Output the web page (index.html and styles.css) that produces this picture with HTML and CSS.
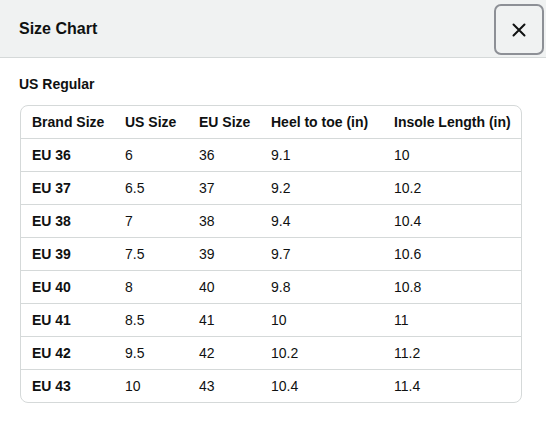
FILE: index.html
```html
<!DOCTYPE html>
<html lang="en">
<head>
    <meta charset="UTF-8">
    <meta name="viewport" content="width=device-width, initial-scale=1.0">
    <title>Size Chart</title>
    <link rel="stylesheet" href="styles.css">
</head>
<body>
    <div class="modal-header">
        <h2 class="modal-title">Size Chart</h2>
        <button class="close-button" aria-label="Close">
            <svg width="16" height="16" viewBox="0 0 16 16">
                <path d="M2.5 2.5 L13.5 13.5 M13.5 2.5 L2.5 13.5" stroke="#0f1111" stroke-width="2" stroke-linecap="round"/>
            </svg>
        </button>
    </div>
    <div class="modal-body">
        <h3 class="section-title">US Regular</h3>
        <div class="table-wrap">
            <table class="size-table">
                <thead>
                    <tr>
                        <th class="col-brand">Brand Size</th>
                        <th class="col-us">US Size</th>
                        <th class="col-eu">EU Size</th>
                        <th class="col-heel">Heel to toe (in)</th>
                        <th class="col-insole">Insole Length (in)</th>
                    </tr>
                </thead>
                <tbody>
                    <tr><th>EU 36</th><td>6</td><td>36</td><td>9.1</td><td>10</td></tr>
                    <tr><th>EU 37</th><td>6.5</td><td>37</td><td>9.2</td><td>10.2</td></tr>
                    <tr><th>EU 38</th><td>7</td><td>38</td><td>9.4</td><td>10.4</td></tr>
                    <tr><th>EU 39</th><td>7.5</td><td>39</td><td>9.7</td><td>10.6</td></tr>
                    <tr><th>EU 40</th><td>8</td><td>40</td><td>9.8</td><td>10.8</td></tr>
                    <tr><th>EU 41</th><td>8.5</td><td>41</td><td>10</td><td>11</td></tr>
                    <tr><th>EU 42</th><td>9.5</td><td>42</td><td>10.2</td><td>11.2</td></tr>
                    <tr><th>EU 43</th><td>10</td><td>43</td><td>10.4</td><td>11.4</td></tr>
                </tbody>
            </table>
        </div>
    </div>
</body>
</html>
```

FILE: styles.css
```css
body {
    font-family: "Liberation Sans", Arial, sans-serif;
    color: #0f1111;
    margin: 0;
    padding: 0;
    background-color: #ffffff;
}
.modal-header {
    background-color: #f0f2f2;
    border-bottom: 1px solid #d5d9d9;
    height: 57px;
    padding: 0 2px 0 19px;
    display: flex;
    justify-content: space-between;
    align-items: center;
}
.modal-title {
    margin: 0;
    font-size: 16px;
    font-weight: 700;
}
.close-button {
    width: 50px;
    height: 51px;
    margin-top: 2px;
    border: 2px solid #8d9096;
    border-radius: 7px;
    background-color: #f0f2f2;
    display: flex;
    align-items: center;
    justify-content: center;
    padding: 0;
    cursor: pointer;
}
.modal-body {
    padding: 18px 24px 0 20px;
}
.section-title {
    margin: 0 0 12px -1px;
    font-size: 14px;
    font-weight: 700;
    line-height: 17px;
}
.table-wrap {
    border: 1px solid #d5d9d9;
    border-radius: 8px;
    overflow: hidden;
}
.size-table {
    width: 100%;
    border-collapse: collapse;
    font-size: 14px;
}
.size-table th,
.size-table td {
    height: 32px;
    padding: 0 0 0 11px;
    text-align: left;
    white-space: nowrap;
}
.size-table th {
    font-weight: 700;
}
.size-table td {
    font-weight: 400;
}
.size-table tbody tr {
    border-top: 1px solid #d5d9d9;
}
.col-brand { width: 82px; }
.col-us { width: 63px; }
.col-eu { width: 61px; }
.col-heel { width: 112px; }
```
